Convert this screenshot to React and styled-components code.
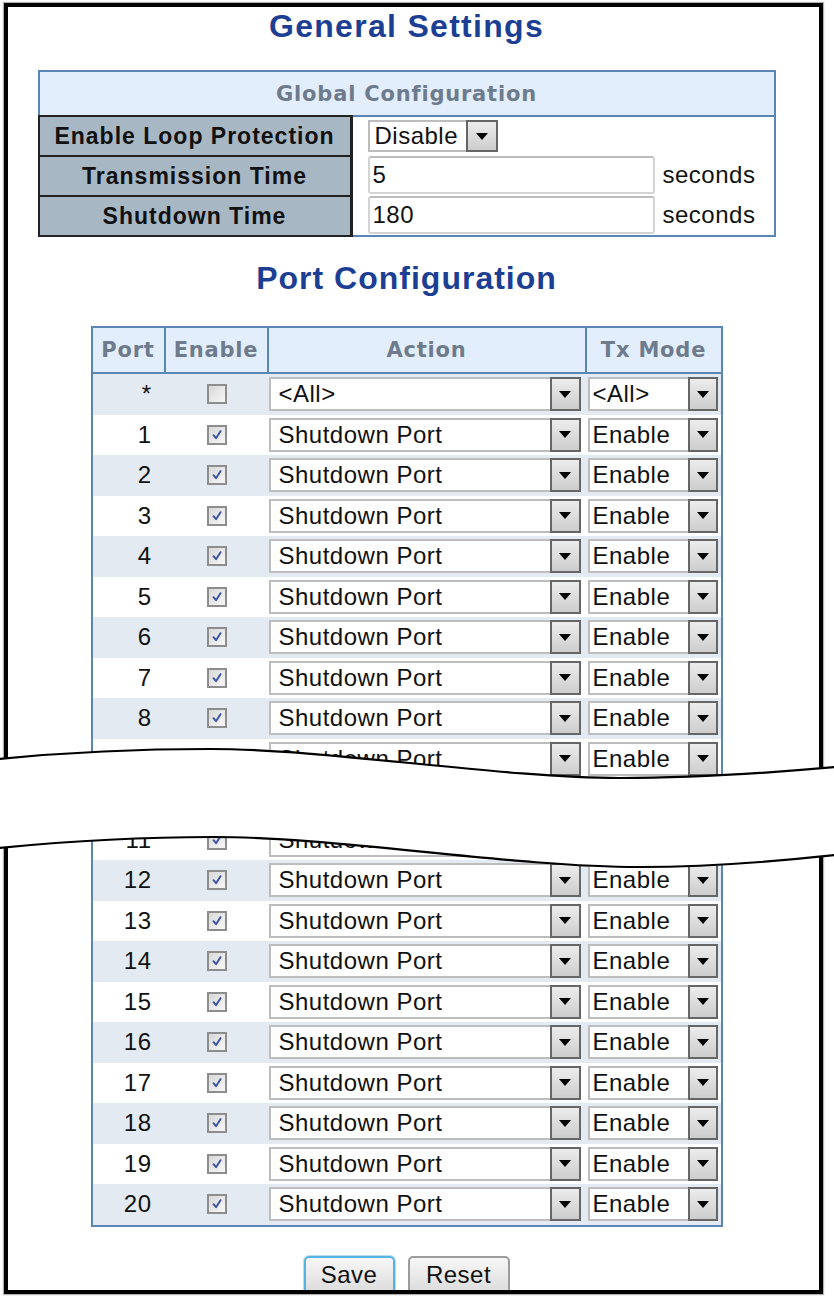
import React from 'react';
import styled, { createGlobalStyle } from 'styled-components';

const GlobalStyle = createGlobalStyle`
  html, body { margin: 0; padding: 0; background: #fff; }
  body { font-family: "Liberation Sans", Arial, sans-serif; color: #111; }
`;

const BLUE = '#5a86b7';

const Page = styled.div`
  position: relative;
  width: 834px;
  height: 1296px;
  overflow: hidden;
  background: #fff;
`;

const Frame = styled.div`
  box-sizing: border-box;
  margin: 3px 0 0 4px;
  width: 819px;
  height: 1291px;
  border: 4px solid #000;
  box-shadow: 0 0 1px 1px rgba(0, 0, 0, 0.3);
  overflow: hidden;
  padding: 1px 14px 0 0;
`;

const PageTitle = styled.h1`
  margin: ${p => p.$top || 0}px 0 0;
  font-family: "Liberation Sans", Arial, sans-serif;
  font-size: 32px;
  line-height: 36px;
  font-weight: bold;
  letter-spacing: ${p => p.$ls || 1.3}px;
  color: #1c3f94;
  text-align: center;
`;

const GlobalTable = styled.div`
  width: 738px;
  margin: 26px auto 0;
`;

const TableHeader = styled.div`
  box-sizing: border-box;
  height: 45px;
  border: 2px solid ${BLUE};
  border-bottom: none;
  background: #e2eefc;
  display: flex;
  align-items: center;
  justify-content: center;
  font-family: "DejaVu Sans", Verdana, sans-serif;
  font-weight: bold;
  font-size: 21px;
  letter-spacing: 0.8px;
  color: #6e7b8c;
`;

const ParamRow = styled.div`
  display: flex;
  height: ${p => (p.$last ? 42 : 40)}px;
`;

const ParamLabel = styled.div`
  box-sizing: border-box;
  flex: none;
  width: 315px;
  background: #a8b7c4;
  border: 2px solid #222;
  border-right-width: 3px;
  border-bottom: ${p => (p.$last ? '2px solid #222' : 'none')};
  display: flex;
  align-items: center;
  justify-content: center;
  font-weight: bold;
  font-size: 23px;
  letter-spacing: 1px;
  color: #111;
  white-space: nowrap;
`;

const ParamValue = styled.div`
  box-sizing: border-box;
  flex: 1;
  display: flex;
  align-items: center;
  gap: 8px;
  padding-left: 15px;
  background: #fff;
  border-right: 2px solid ${BLUE};
  border-top: ${p => (p.$first ? `2px solid ${BLUE}` : 'none')};
  border-bottom: ${p => (p.$last ? `2px solid ${BLUE}` : 'none')};
`;

const TextField = styled.input`
  box-sizing: border-box;
  width: 287px;
  height: 38px;
  margin: 0;
  border: 2px solid #d4d4d4;
  border-top-color: #bdbdbd;
  border-radius: 3px;
  padding: 0 0 0 3px;
  font: 24px "Liberation Sans", Arial, sans-serif;
  letter-spacing: 0.5px;
  color: #111;
  background: #fff;
  outline: none;
`;

const Unit = styled.span`
  font-size: 24px;
  letter-spacing: 0.5px;
  color: #111;
`;

const Select = styled.div`
  box-sizing: border-box;
  display: flex;
  flex: none;
  width: ${p => p.$w}px;
  height: ${p => p.$h}px;
  margin-left: ${p => p.$ml || 0}px;
`;

const SelectText = styled.div`
  flex: 1;
  box-sizing: border-box;
  border: 2px solid #bdbdbd;
  border-right: none;
  background: #fff;
  display: flex;
  align-items: center;
  padding-left: ${p => p.$pad}px;
  font-size: 24px;
  letter-spacing: 0.5px;
  color: #111;
  white-space: nowrap;
  overflow: hidden;
`;

const DropButton = styled.div`
  box-sizing: border-box;
  flex: none;
  width: ${p => p.$bw}px;
  height: 100%;
  border: 2px solid #666;
  background: linear-gradient(#ececec, #cdcdcd);
  display: flex;
  align-items: center;
  justify-content: center;
  &::after {
    content: '';
    border-left: 6px solid transparent;
    border-right: 6px solid transparent;
    border-top: 7px solid #000;
  }
`;

const PortTable = styled.div`
  box-sizing: border-box;
  width: 632px;
  margin: 30px auto 0;
  border: 2px solid ${BLUE};
`;

const COLS = '73px 103px 318px 134px';

const PortHeader = styled.div`
  display: grid;
  grid-template-columns: ${COLS};
  height: 46px;
  box-sizing: border-box;
  border-bottom: 2px solid ${BLUE};
  background: #e2eefc;
`;

const HeadCell = styled.div`
  display: flex;
  align-items: center;
  justify-content: center;
  border-right: ${p => (p.$last ? 'none' : `2px solid ${BLUE}`)};
  font-family: "DejaVu Sans", Verdana, sans-serif;
  font-weight: bold;
  font-size: 21px;
  letter-spacing: 0.8px;
  color: #6e7b8c;
  white-space: nowrap;
`;

const PortRow = styled.div`
  display: grid;
  grid-template-columns: ${COLS};
  align-items: center;
  height: 40.5px;
  background: ${p => (p.$shade ? '#e3eaf2' : '#fff')};
`;

const PortNum = styled.div`
  text-align: right;
  padding-right: 14px;
  font-size: 24px;
  letter-spacing: 0.5px;
  color: #111;
`;

const CheckCell = styled.div`
  display: flex;
  justify-content: center;
`;

const CheckBox = styled.span`
  box-sizing: border-box;
  width: 20px;
  height: 20px;
  border: 2px solid #8d8d8d;
  background: linear-gradient(135deg, #d8d8d8, #f7f7f7);
  display: inline-flex;
  align-items: center;
  justify-content: center;
`;

const ButtonBar = styled.div`
  display: flex;
  justify-content: center;
  gap: 13px;
  margin-top: 29.5px;
`;

const Btn = styled.button`
  box-sizing: border-box;
  width: ${p => p.$w}px;
  height: 38px;
  padding: 0;
  border-radius: 5px;
  border: 2px solid ${p => (p.$focus ? '#56b2e4' : '#9c9c9c')};
  box-shadow: ${p => (p.$focus ? '0 0 0 1px #b5def4' : 'none')};
  background: linear-gradient(#f7f7f7, #dcdcdc);
  font: 24px "Liberation Sans", Arial, sans-serif;
  letter-spacing: 0.5px;
  color: #111;
`;

const TearOverlay = styled.svg`
  position: absolute;
  left: 0;
  top: 0;
  width: 834px;
  height: 1296px;
  pointer-events: none;
`;

const Check = ({ on }) => (
  <CheckBox>
    {on && (
      <svg width="14" height="14" viewBox="0 0 14 14">
        <path d="M3.5 7.2 L6 10.2 L10.5 3.2" fill="none" stroke="#3e56a2" strokeWidth="2" strokeLinecap="round" strokeLinejoin="round" />
      </svg>
    )}
  </CheckBox>
);

const Dropdown = ({ value, w, h, bw, pad, ml }) => (
  <Select $w={w} $h={h} $ml={ml}>
    <SelectText $pad={pad}>{value}</SelectText>
    <DropButton $bw={bw} />
  </Select>
);

const rows = [{ port: '*', on: false, action: '<All>', mode: '<All>' }];
for (let i = 1; i <= 20; i++) rows.push({ port: String(i), on: true, action: 'Shutdown Port', mode: 'Enable' });

const TOP = 'M-2 759 C70 752, 140 749, 210 749 C330 749, 500 778, 620 778 C700 778, 780 772, 836 767';
const BOTTOM = 'M-2 848 C70 841, 140 837, 213 837 C340 837, 510 867, 640 867 C720 867, 790 860, 836 855';
const FILL = 'M-2 759 C70 752, 140 749, 210 749 C330 749, 500 778, 620 778 C700 778, 780 772, 836 767 L836 855 C790 860, 720 867, 640 867 C510 867, 340 837, 213 837 C140 837, 70 841, -2 848 Z';

export default function App() {
  return (
    <Page>
      <GlobalStyle />
      <Frame>
        <PageTitle>General Settings</PageTitle>
        <GlobalTable>
          <TableHeader>Global Configuration</TableHeader>
          <ParamRow>
            <ParamLabel>Enable Loop Protection</ParamLabel>
            <ParamValue $first>
              <Dropdown value="Disable" w={130} h={32} bw={32} pad={5} />
            </ParamValue>
          </ParamRow>
          <ParamRow>
            <ParamLabel>Transmission Time</ParamLabel>
            <ParamValue>
              <TextField defaultValue="5" />
              <Unit>seconds</Unit>
            </ParamValue>
          </ParamRow>
          <ParamRow $last>
            <ParamLabel $last>Shutdown Time</ParamLabel>
            <ParamValue $last>
              <TextField defaultValue="180" />
              <Unit>seconds</Unit>
            </ParamValue>
          </ParamRow>
        </GlobalTable>

        <PageTitle $top={23} $ls={1}>Port Configuration</PageTitle>
        <PortTable>
          <PortHeader>
            <HeadCell>Port</HeadCell>
            <HeadCell>Enable</HeadCell>
            <HeadCell>Action</HeadCell>
            <HeadCell $last>Tx Mode</HeadCell>
          </PortHeader>
          {rows.map((r, i) => (
            <PortRow key={r.port} $shade={i % 2 === 0}>
              <PortNum>{r.port}</PortNum>
              <CheckCell><Check on={r.on} /></CheckCell>
              <div><Dropdown value={r.action} w={312} h={34} bw={31} pad={8} /></div>
              <div><Dropdown value={r.mode} w={130} h={34} bw={30} pad={3} ml={1} /></div>
            </PortRow>
          ))}
        </PortTable>

        <ButtonBar>
          <Btn $w={91} $focus>Save</Btn>
          <Btn $w={102}>Reset</Btn>
        </ButtonBar>
      </Frame>
      <TearOverlay viewBox="0 0 834 1296">
        <path d={FILL} fill="#fff" />
        <path d={TOP} fill="none" stroke="#000" strokeWidth="2.2" />
        <path d={BOTTOM} fill="none" stroke="#000" strokeWidth="2.2" />
      </TearOverlay>
    </Page>
  );
}
